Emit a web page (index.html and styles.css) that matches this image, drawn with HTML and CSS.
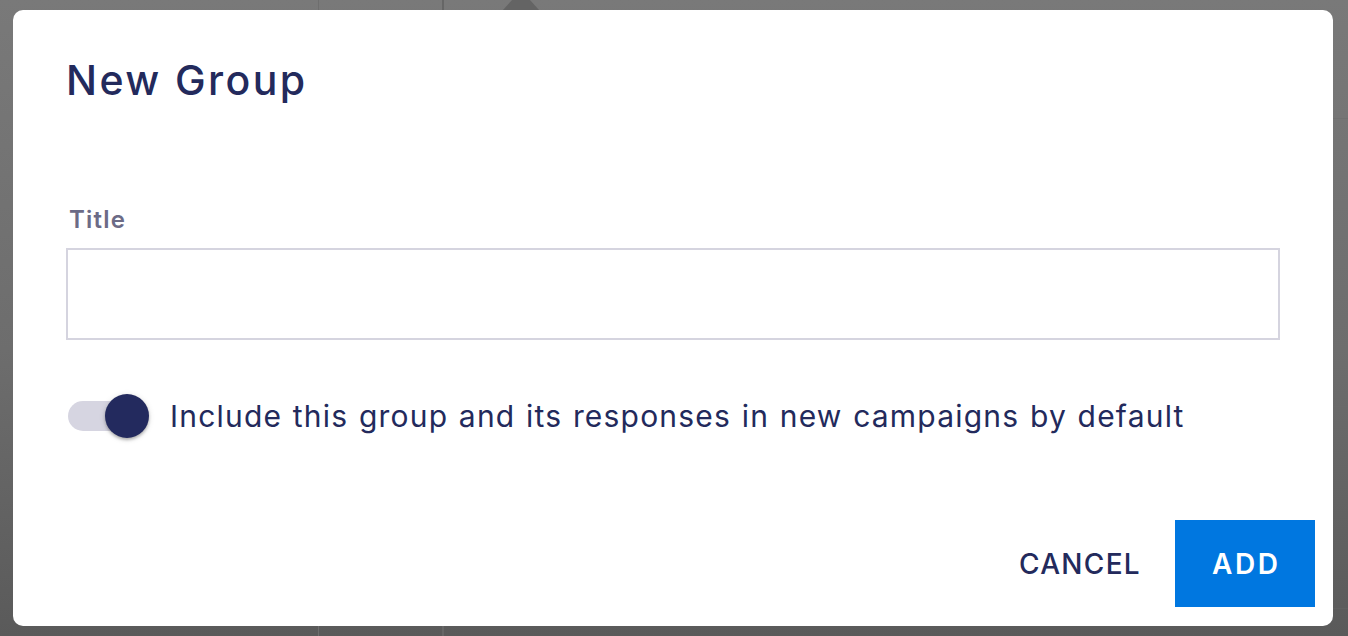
FILE: index.html
```html
<!DOCTYPE html>
<html lang="en">
<head>
<meta charset="utf-8">
<title>New Group</title>
<link rel="stylesheet" href="styles.css">
</head>
<body>
<div class="backdrop">
  <div class="bg-tri"></div>
</div>
<div class="dialog" role="dialog" aria-labelledby="dlg-title">
  <h1 class="dialog-title" id="dlg-title">New Group</h1>
  <div class="dialog-content">
    <label class="field-label" for="title">Title</label>
    <input class="field-input" id="title" type="text">
    <div class="switch-row">
      <span class="switch">
        <span class="switch-track"></span>
        <span class="switch-thumb"></span>
      </span>
      <span class="switch-label">Include this group and its responses in new campaigns by default</span>
    </div>
  </div>
  <div class="dialog-actions">
    <button class="btn btn-text" type="button">CANCEL</button>
    <button class="btn btn-primary" type="button">ADD</button>
  </div>
</div>
</body>
</html>
```

FILE: styles.css
```css
* { box-sizing: border-box; }

html, body {
  margin: 0;
  height: 636px;
  overflow: hidden;
}

body {
  position: relative;
  font-family: "Inter", "Open Sans", sans-serif;
  color: #232a5c;
  background:
    linear-gradient(#6e6e6e, #6e6e6e) 318px 0 / 1px 100% no-repeat,
    linear-gradient(#666, #666) 442px 0 / 2px 100% no-repeat,
    linear-gradient(#707070, #707070) 1333px 118px / 15px 1px no-repeat,
    linear-gradient(#6a6a6a, #6a6a6a) 1333px 406px / 15px 1px no-repeat,
    linear-gradient(#606060, #606060) 1333px 608px / 15px 1px no-repeat,
    linear-gradient(180deg, #797979 0%, #6d6d6d 55%, #5a5a5a 100%);
}

.backdrop {
  position: absolute;
  inset: 0;
}

.bg-tri {
  position: absolute;
  left: 503px;
  top: -10px;
  width: 0;
  height: 0;
  border-left: 18px solid transparent;
  border-right: 18px solid transparent;
  border-bottom: 20px solid #646464;
}

.dialog {
  position: absolute;
  left: 13px;
  top: 10px;
  width: 1320px;
  height: 616px;
  background: #fff;
  border-radius: 10px;
  display: flex;
  flex-direction: column;
}

.dialog-title {
  margin: 0;
  padding: 46px 53px 0 53px;
  font-size: 41px;
  line-height: 48px;
  font-weight: 500;
  letter-spacing: 2.4px;
  color: #232a5c;
}

.dialog-content {
  padding: 0 53px;
  display: flex;
  flex-direction: column;
}

.field-label {
  margin-top: 102px;
  margin-left: 3px;
  font-size: 24px;
  line-height: 28px;
  font-weight: 600;
  letter-spacing: 1.2px;
  color: #6c6b86;
}

.field-input {
  margin-top: 14px;
  width: 100%;
  height: 92px;
  border: 2px solid #d5d4df;
  border-radius: 0;
  background: #fff;
  outline: none;
  font: inherit;
}

.switch-row {
  margin-top: 52px;
  display: flex;
  align-items: center;
  height: 48px;
}

.switch {
  position: relative;
  width: 84px;
  height: 48px;
  flex: none;
}

.switch-track {
  position: absolute;
  left: 2px;
  top: 9px;
  width: 72px;
  height: 30px;
  border-radius: 15px;
  background: #d6d5e1;
}

.switch-thumb {
  position: absolute;
  left: 39px;
  top: 2px;
  width: 44px;
  height: 44px;
  border-radius: 50%;
  background: #232a5e;
  box-shadow: 0 2px 3px rgba(0, 0, 0, 0.25), 0 1px 6px rgba(0, 0, 0, 0.12);
}

.switch-label {
  margin-left: 20px;
  font-size: 30px;
  font-weight: 400;
  letter-spacing: 1.2px;
  word-spacing: 1px;
  color: #232a5c;
  white-space: nowrap;
}

.dialog-actions {
  margin-top: auto;
  padding: 0 18px 19px 0;
  display: flex;
  justify-content: flex-end;
  align-items: center;
}

.btn {
  border: 0;
  font-family: inherit;
  font-size: 28px;
  font-weight: 600;
  cursor: pointer;
  height: 87px;
}

.btn-text {
  background: transparent;
  color: #232a5c;
  padding: 0 34px 0 0;
  font-weight: 500;
  letter-spacing: 1.3px;
}

.btn-primary {
  background: #0077e0;
  color: #fff;
  width: 140px;
  letter-spacing: 2.5px;
  text-indent: 2.5px;
}
```
